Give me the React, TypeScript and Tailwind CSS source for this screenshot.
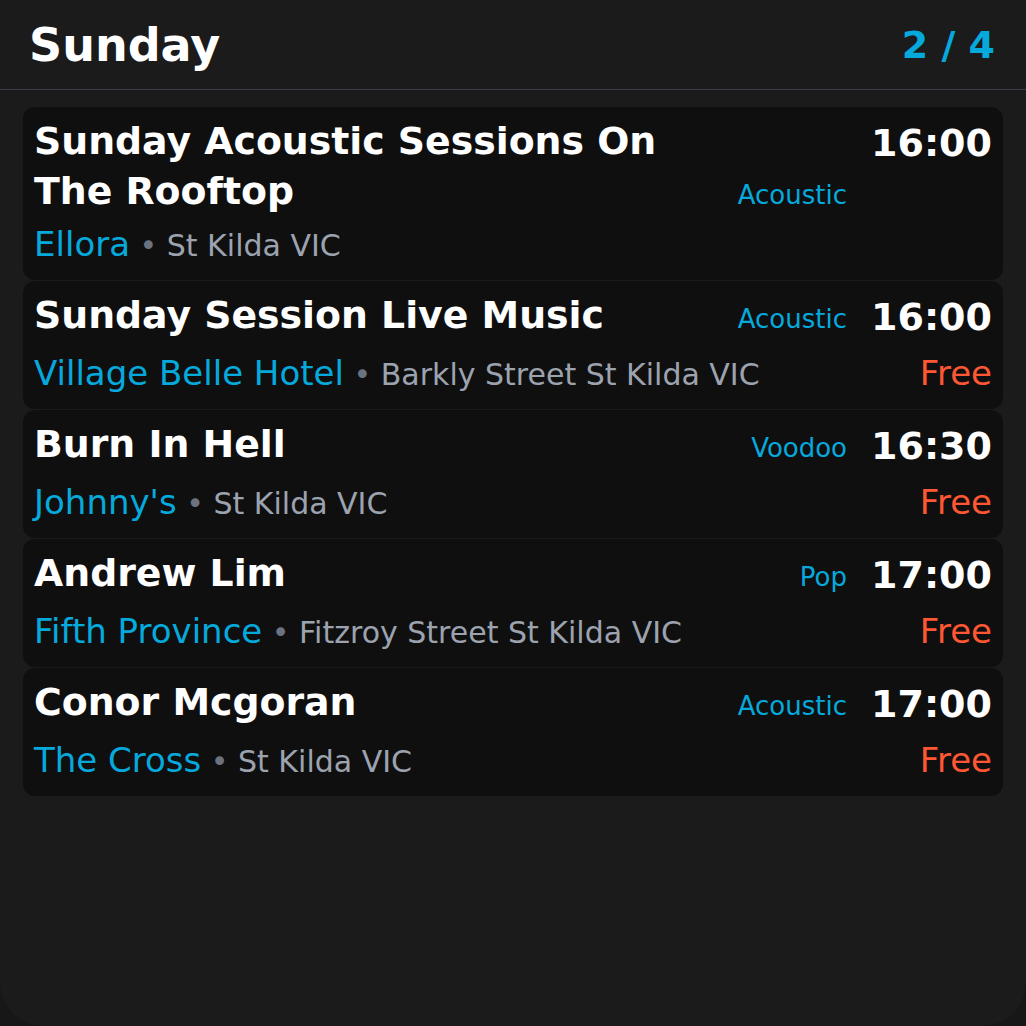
const events = [
  {
    title: 'Sunday Acoustic Sessions On The Rooftop',
    genre: 'Acoustic',
    time: '16:00',
    venue: 'Ellora',
    address: 'St Kilda VIC',
    price: '',
  },
  {
    title: 'Sunday Session Live Music',
    genre: 'Acoustic',
    time: '16:00',
    venue: 'Village Belle Hotel',
    address: 'Barkly Street St Kilda VIC',
    price: 'Free',
  },
  {
    title: 'Burn In Hell',
    genre: 'Voodoo',
    time: '16:30',
    venue: "Johnny's",
    address: 'St Kilda VIC',
    price: 'Free',
  },
  {
    title: 'Andrew Lim',
    genre: 'Pop',
    time: '17:00',
    venue: 'Fifth Province',
    address: 'Fitzroy Street St Kilda VIC',
    price: 'Free',
  },
  {
    title: 'Conor Mcgoran',
    genre: 'Acoustic',
    time: '17:00',
    venue: 'The Cross',
    address: 'St Kilda VIC',
    price: 'Free',
  },
];

export default function App() {
  return (
    <div
      className="w-[1026px] h-[1026px] bg-[#171717] overflow-hidden"
      style={{ fontFamily: '"DejaVu Sans", Verdana, sans-serif' }}
    >
      <div className="h-full bg-[#1b1b1b] rounded-[44px] rounded-t-none flex flex-col">
        <header className="h-[90px] shrink-0 flex items-center justify-between pl-[29px] pr-[31px] border-b border-[#3a3f4a]">
          <h1 className="text-[46px] font-bold text-white leading-none">Sunday</h1>
          <div className="text-[38px] font-bold text-[#06a9dc] leading-none">2 / 4</div>
        </header>

        <div className="px-[23px] pt-[17px] flex flex-col gap-px">
          {events.map((e, i) => (
            <div
              key={i}
              className="bg-[#0f0f0f] rounded-xl pl-[11px] pr-[11px] pt-[9px] pb-[10px] grid grid-cols-[1fr_auto] gap-x-6 gap-y-[3px] shadow-[0_0_24px_rgba(255,255,255,0.015)]"
            >
              <div className="self-start flex items-end gap-6">
                <div className="flex-1 text-[37.8px] font-bold text-white leading-[50px]">
                  {e.title}
                </div>
                <div className="shrink-0 pb-[5px] text-[26px] text-[#06a9dc] leading-[1.25]">
                  {e.genre}
                </div>
              </div>
              <div className="text-right text-[38px] font-bold text-white leading-[55px]">
                {e.time}
              </div>
              <div className="text-[34px] leading-[51px] whitespace-nowrap">
                <span className="text-[#06a9dc]">{e.venue}</span>
                <span className="text-[30px] leading-none text-[#6b7280]"> • </span>
                <span className="text-[30px] leading-none text-[#9ca3af]">{e.address}</span>
              </div>
              <div className="text-right text-[34px] text-[#ff5733] leading-[51px]">
                {e.price}
              </div>
            </div>
          ))}
        </div>
      </div>
    </div>
  );
}
